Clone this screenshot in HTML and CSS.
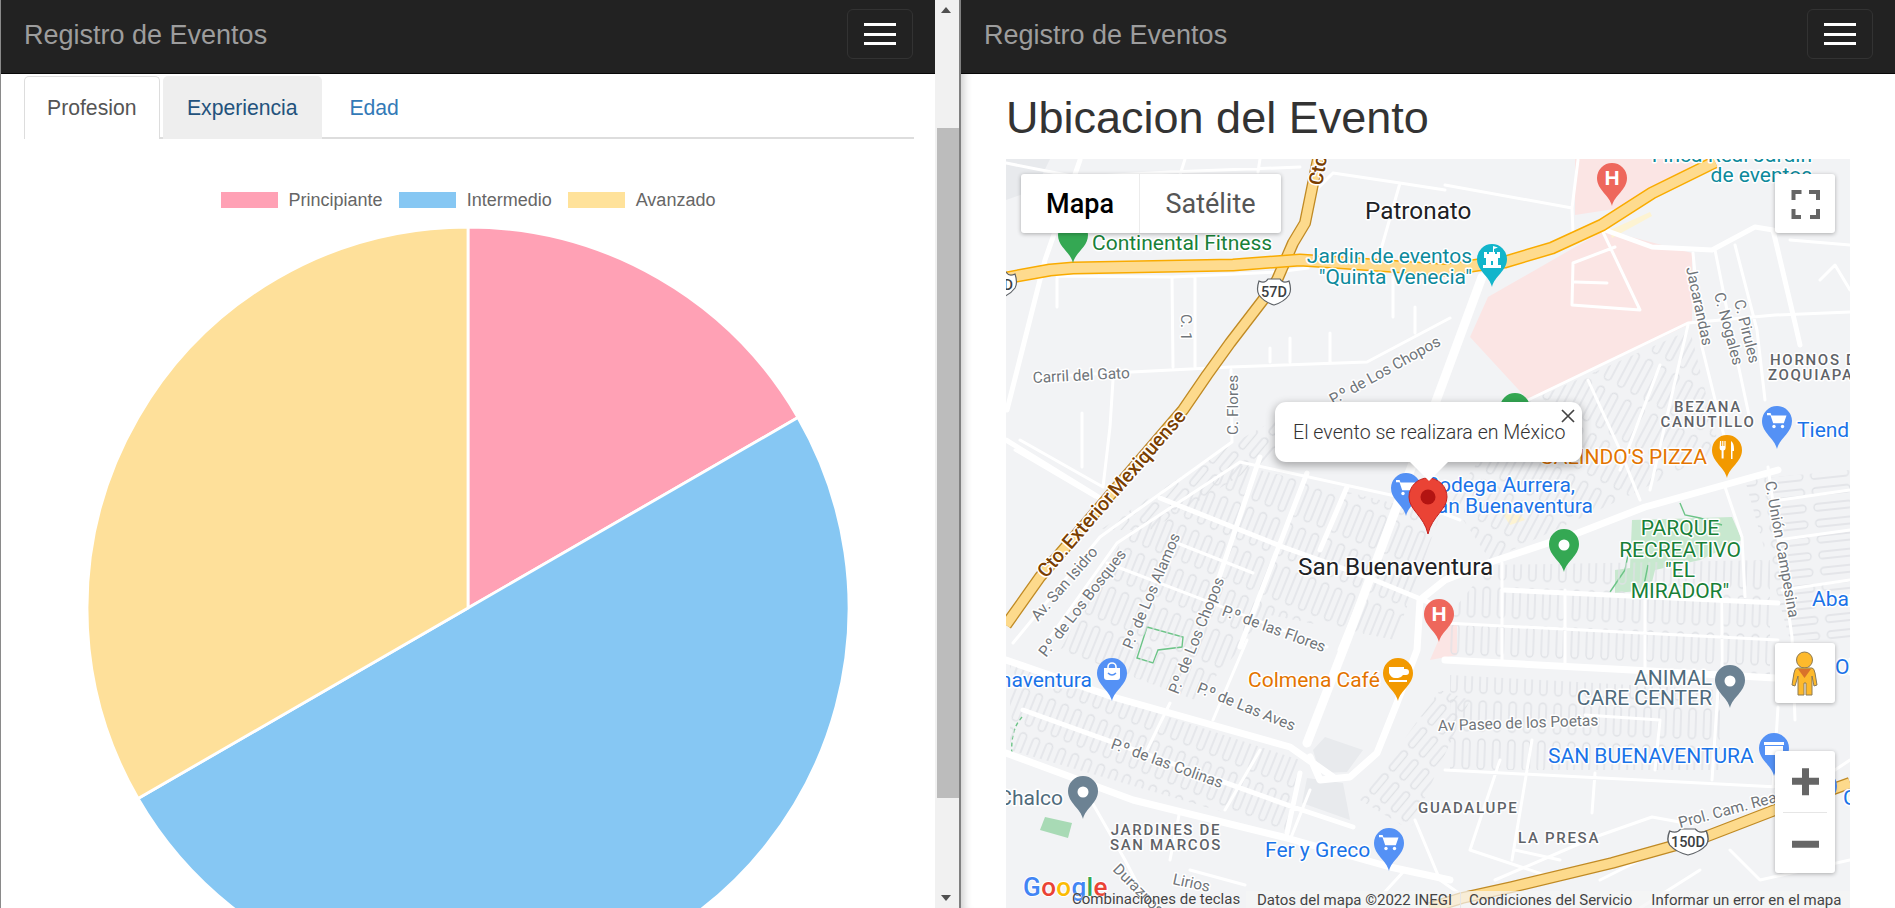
FILE: index.html
```html
<!DOCTYPE html>
<html lang="es">
<head>
<meta charset="utf-8">
<title>Registro de Eventos</title>
<link rel="stylesheet" href="styles.css">
</head>
<body>
<div class="app">
  <section class="pane-left">
    <div class="left-main">
      <nav class="navbar">
        <a class="brand">Registro de Eventos</a>
        <button class="toggler"><span></span><span></span><span></span></button>
      </nav>
      <ul class="tabs">
        <li class="tab active">Profesion</li>
        <li class="tab hover">Experiencia</li>
        <li class="tab">Edad</li>
      </ul>
      <div class="legend">
        <div class="legend-item"><i class="swatch pink"></i>Principiante</div>
        <div class="legend-item"><i class="swatch blue"></i>Intermedio</div>
        <div class="legend-item"><i class="swatch yellow"></i>Avanzado</div>
      </div>
      <svg class="pie" viewBox="-385 -385 770 770" width="770" height="770">
        <path class="slice s-pink" d="M0,0 L0,-381 A381,381 0 0 1 329.96,-190.5 Z"/>
        <path class="slice s-blue" d="M0,0 L329.96,-190.5 A381,381 0 0 1 -329.96,190.5 Z"/>
        <path class="slice s-yellow" d="M0,0 L-329.96,190.5 A381,381 0 0 1 0,-381 Z"/>
      </svg>
    </div>
    <div class="scrollbar">
      <div class="arrow-up"></div>
      <div class="thumb"></div>
      <div class="arrow-down"></div>
    </div>
  </section>

  <section class="pane-right">
    <nav class="navbar">
      <a class="brand">Registro de Eventos</a>
      <button class="toggler"><span></span><span></span><span></span></button>
    </nav>
    <div class="right-body">
      <h2 class="title">Ubicacion del Evento</h2>
      <div class="map">
        <svg class="map-canvas" viewBox="1006 159 844 749" width="844" height="749">
          <defs>
            <path id="pin" d="M0,43 C-2.5,32 -15,27 -15,15 A15,15 0 1 1 15,15 C15,27 2.5,32 0,43Z"/>
            <g id="cart"><path class="ico" d="M-10,7 h3.6 l.9,2.6 h15 l-2.7,7.6 h-10.6 l-2.7,-8 h-3.5z"/><circle class="ico" cx="-3" cy="20.5" r="1.7"/><circle class="ico" cx="5.5" cy="20.5" r="1.7"/></g>
            <path id="shield" d="M-15,-11 Q-9,-8 -6,-13 H6 Q9,-8 15,-11 Q18,-2 15,3 Q10,10 0,13 Q-10,10 -15,3 Q-18,-2 -15,-11Z"/>
            <pattern id="comb22" width="14" height="42" patternUnits="userSpaceOnUse" patternTransform="rotate(22)"><rect class="alley" x="3" y="2" width="7" height="34" rx="3.5"/></pattern>
            <pattern id="comb40" width="14" height="30" patternUnits="userSpaceOnUse" patternTransform="rotate(40)"><rect class="alley" x="3" y="2" width="6.5" height="24" rx="3.2"/></pattern>
            <pattern id="comb28" width="15" height="46" patternUnits="userSpaceOnUse" patternTransform="rotate(28)"><rect class="alley" x="3" y="3" width="7" height="38" rx="3.5"/></pattern>
            <pattern id="comb3" width="15" height="38" patternUnits="userSpaceOnUse" patternTransform="rotate(2)"><rect class="alley" x="3" y="3" width="7" height="30" rx="3.5"/></pattern>
            <pattern id="combh" width="46" height="16" patternUnits="userSpaceOnUse" patternTransform="rotate(-6)"><rect class="alley" x="3" y="3" width="38" height="7" rx="3.5"/></pattern>
          </defs>

          <rect class="land" x="1006" y="159" width="844" height="749"/>

          <path class="pink-area" d="M1575,159 L1700,159 L1640,205 L1575,215Z M1488,297 L1605,230 L1692,253 L1692,323 L1528,400 L1470,337Z M1445,625 L1457,625 L1457,655 L1430,660Z"/>
          <path class="pale-area" d="M1610,230 L1650,212 L1652,216 L1612,238Z M1500,510 L1512,505 L1525,520 L1510,525Z"/>
          <path class="gray-area" d="M1302,803 L1307,778 L1343,783 L1350,820Z M1313,750 L1325,737 L1363,750 L1347,772 L1320,773Z M1002,159 L1050,159 L1035,190 L1006,200Z"/>
          <path class="park-soft" d="M1632,520 L1732,517 L1742,540 L1700,560 L1655,570 L1650,590 L1615,593 L1615,570 L1630,568Z"/>
          <path class="park" d="M1040,830 L1045,817 L1072,823 L1068,838Z"/>
          <path class="park-line" d="M1147,627 L1183,637 L1182,647 L1158,650 L1153,663 L1137,658 Z M1680,503 L1685,515 L1700,518 L1722,525 M1610,592 L1625,570 L1630,545 M1643,590 L1648,565"/>
          <path class="park-line dashed" d="M1022,717 Q1010,730 1012,755"/>

          <path fill="url(#comb22)" d="M1125,535 L1240,465 L1440,515 L1395,640 L1270,615 L1195,700 L1060,650Z"/>
          <path fill="url(#comb40)" d="M1100,530 L1230,445 L1275,420 L1275,455 L1150,530Z"/>
          <path fill="url(#comb28)" d="M1520,405 L1690,330 L1720,450 L1620,500 L1490,560 L1450,500Z"/>
          <path fill="url(#comb3)" d="M1490,565 L1770,560 L1770,680 L1445,660 L1445,620Z"/>
          <path fill="url(#comb22)" d="M1010,665 L1300,760 L1285,830 L1010,750Z"/>
          <path fill="url(#comb3)" d="M1450,675 L1720,690 L1720,770 L1450,770Z"/>
          <path fill="url(#combh)" d="M1745,480 L1850,470 L1850,640 L1790,640Z"/>
          <path fill="url(#comb40)" d="M1360,800 L1440,690 L1470,700 L1410,830Z"/>

          <path class="road r-thin" d="M1006,163 L1077,177 L1170,172 L1300,167 M1185,159 L1180,175 M1260,159 L1258,172 M1057,276 L1173,277 L1277,272 L1308,268 M1033,377 L1230,367 L1367,362 L1450,318 M1172,277 L1173,367 M1195,277 L1195,367 M1057,278 L1057,307 M1333,173 L1400,183 L1445,190 M1333,173 L1318,188 M1400,183 L1380,253 M1393,277 L1393,317 M1415,307 L1415,333 M1330,333 L1330,363 M1290,338 L1290,362 M1270,348 L1270,362 M1113,380 L1110,427 L1103,487 M1082,413 L1082,467 M1020,440 L1103,487 M1015,450 L1095,497 M1231,370 L1232,442 L1100,537 L1013,643 M1240,462 L1117,543 L1043,647 M1240,462 L1400,497 L1460,520 M1107,563 L1327,647 M1177,543 L1253,573 M1445,185 L1572,208 L1573,233 M1578,160 L1572,208 M1615,247 L1573,263 L1572,305 L1640,310 L1602,230 M1575,282 L1607,283 M1528,400 L1688,323 L1775,315 L1850,312 M1693,253 L1702,347 L1725,440 M1715,250 L1735,350 L1750,420 M1735,245 L1757,330 L1765,400 M1790,240 L1850,245 M1820,280 L1835,265 L1850,290 M1588,380 L1620,450 L1640,500 M1660,365 L1620,470 M1688,325 L1650,490 M1725,487 L1742,537 L1745,597 M1768,467 L1792,637 L1795,720 M1778,540 L1850,530 M1782,590 L1850,580 M1780,500 L1850,490 M1502,563 L1502,663 M1565,590 L1565,663 M1645,600 L1645,667 M1722,603 L1722,677 M1445,623 L1778,640 M1445,770 L1778,787 M1532,740 L1512,860 M1595,773 L1592,813 M1652,817 L1595,837 L1495,880 M1652,817 L1685,823 M1718,690 L1712,780 M1778,707 L1773,787 M1585,715 L1660,720 L1655,770 M1170,703 L1147,750 M1247,640 L1213,720 M1260,750 L1225,810 M1310,790 L1290,840 M1085,790 L1125,860 L1150,908 M1180,810 L1170,860 M1190,870 L1245,885 M1405,870 L1370,908 M1415,820 L1440,880 L1480,908 M1470,850 L1560,880 M1560,860 L1515,850 M1500,760 L1470,850 M1600,880 L1660,850 M1700,870 L1640,908 M1850,760 L1790,800 M1730,850 L1760,880 L1850,860"/>
          <path class="road r-mid" d="M1080,160 L1045,260 L1007,410 M1023,710 L1293,807 L1353,827 M1160,498 L1283,547 L1367,577 L1440,607 M1397,510 L1340,650 M1307,473 L1240,647 M1260,457 L1207,613 M1347,487 L1320,550 M1300,773 L1287,833 M1605,230 L1652,247 L1712,250 L1755,227 L1773,230 L1795,323 L1800,345 M1503,590 L1778,603 M1006,440 L1103,500"/>
          <path class="road r-thick" d="M1006,660 L1113,697 L1290,747 L1333,777 M1006,753 L1133,800 L1283,837 L1390,867 L1450,880 M1445,660 L1632,670 L1775,678 M1778,470 L1645,507 L1578,533 L1488,563 L1445,580 L1420,600 L1417,650 L1397,703 L1377,753 L1350,777 L1320,780 L1310,757"/>
          <path class="road r-wide" d="M1482,277 L1445,377 L1347,640 L1307,743"/>

          <path class="hw-edge" d="M1318,159 L1305,223 L1293,243 L1277,280 L1263,300 L1230,343 L1207,375 L1183,410 L1117,487 L1040,577 L1006,625"/>
          <path class="hw-fill" d="M1318,159 L1305,223 L1293,243 L1277,280 L1263,300 L1230,343 L1207,375 L1183,410 L1117,487 L1040,577 L1006,625"/>
          <path class="hw-edge2" d="M1006,278 L1050,270 L1073,268 L1233,265 L1300,260 L1345,263 L1445,270 L1478,265 L1505,262 L1552,248 L1602,225 L1652,193 L1715,162"/>
          <path class="hw-fill2" d="M1006,278 L1050,270 L1073,268 L1233,265 L1300,260 L1345,263 L1445,270 L1478,265 L1505,262 L1552,248 L1602,225 L1652,193 L1715,162"/>
          <path class="hw-edge" d="M1850,783 L1775,810 L1705,837 L1612,863 L1512,887 L1462,898 L1430,908"/>
          <path class="hw-fill" d="M1850,783 L1775,810 L1705,837 L1612,863 L1512,887 L1462,898 L1430,908"/>

          <g transform="translate(1274,292)"><use href="#shield" class="shield"/><text class="shield-text" y="5" text-anchor="middle">57D</text></g>
          <g transform="translate(1688,842) scale(1.22,1)"><use href="#shield" class="shield"/></g>
          <text class="shield-text" x="1688" y="847" text-anchor="middle">150D</text>
          <g transform="translate(1000,285)"><use href="#shield" class="shield"/><text class="shield-text" y="5" text-anchor="middle">57D</text></g>

          <text class="lbl road-name hw" transform="translate(1322,186) rotate(-80)">Cto</text>
          <text class="lbl road-name hw" transform="translate(1046,579) rotate(-49)">Cto. Exterior Mexiquense</text>

          <text class="lbl road-name" transform="translate(1033,383) rotate(-3)">Carril del Gato</text>
          <text class="lbl road-name" transform="translate(1181,314) rotate(90)">C. 1</text>
          <text class="lbl road-name" transform="translate(1238,435) rotate(-90)">C. Flores</text>
          <text class="lbl road-name" transform="translate(1333,405) rotate(-29)">P.º de Los Chopos</text>
          <text class="lbl road-name" transform="translate(1686,268) rotate(78)">Jacarandas</text>
          <text class="lbl road-name" transform="translate(1714,294) rotate(75)">C. Nogales</text>
          <text class="lbl road-name" transform="translate(1734,301) rotate(76)">C. Pirules</text>
          <text class="lbl road-name" transform="translate(1765,482) rotate(80)">C. Unión Campesina</text>
          <text class="lbl road-name" transform="translate(1038,622) rotate(-49)">Av. San Isidro</text>
          <text class="lbl road-name" transform="translate(1046,658) rotate(-52)">P.º de Los Bosques</text>
          <text class="lbl road-name" transform="translate(1132,650) rotate(-67)">P.º de Los Alamos</text>
          <text class="lbl road-name" transform="translate(1178,695) rotate(-68)">P.º de Los Chopos</text>
          <text class="lbl road-name" transform="translate(1221,615) rotate(20)">P.º de las Flores</text>
          <text class="lbl road-name" transform="translate(1196,692) rotate(22)">P.º de Las Aves</text>
          <text class="lbl road-name" transform="translate(1110,748) rotate(20)">P.º de las Colinas</text>
          <text class="lbl road-name" transform="translate(1438,731) rotate(-2)">Av Paseo de los Poetas</text>
          <text class="lbl road-name" transform="translate(1680,828) rotate(-15)">Prol. Cam. Real</text>
          <text class="lbl road-name" transform="translate(1172,884) rotate(12)">Lirios</text>
          <text class="lbl road-name" transform="translate(1112,870) rotate(45)">Duraznos</text>

          <text class="lbl place" x="1365" y="219">Patronato</text>
          <text class="lbl place" x="1298" y="575">San Buenaventura</text>

          <text class="lbl area" x="1708" y="412" text-anchor="middle">BEZANA</text>
          <text class="lbl area" x="1708" y="427" text-anchor="middle">CANUTILLO</text>
          <text class="lbl area" x="1770" y="365">HORNOS DE</text>
          <text class="lbl area" x="1768" y="380">ZOQUIAPAN</text>
          <text class="lbl area" x="1166" y="835" text-anchor="middle">JARDINES DE</text>
          <text class="lbl area" x="1166" y="850" text-anchor="middle">SAN MARCOS</text>
          <text class="lbl area" x="1418" y="813">GUADALUPE</text>
          <text class="lbl area" x="1518" y="843">LA PRESA</text>

          <text class="lbl poi c-green" x="1092" y="250">Continental Fitness</text>
          <text class="lbl poi c-teal" x="1472" y="263" text-anchor="end">Jardin de eventos</text>
          <text class="lbl poi c-teal" x="1472" y="284" text-anchor="end">"Quinta Venecia"</text>
          <text class="lbl poi c-teal" x="1812" y="162" text-anchor="end">Finca Real Jardin</text>
          <text class="lbl poi c-teal" x="1812" y="182" text-anchor="end">de eventos</text>
          <text class="lbl poi c-blue" x="1797" y="437">Tienda</text>
          <text class="lbl poi c-orange" x="1707" y="464" text-anchor="end">GALINDO'S PIZZA</text>
          <text class="lbl poi c-blue" x="1575" y="492" text-anchor="end">Bodega Aurrera,</text>
          <text class="lbl poi c-blue" x="1593" y="513" text-anchor="end">San Buenaventura</text>
          <text class="lbl poi c-green" x="1680" y="535" text-anchor="middle">PARQUE</text>
          <text class="lbl poi c-green" x="1680" y="557" text-anchor="middle">RECREATIVO</text>
          <text class="lbl poi c-green" x="1680" y="577" text-anchor="middle">"EL</text>
          <text class="lbl poi c-green" x="1680" y="598" text-anchor="middle">MIRADOR"</text>
          <text class="lbl poi c-blue" x="1812" y="606">Abarrotes</text>
          <text class="lbl poi c-blue" x="1835" y="674">OXXO</text>
          <text class="lbl poi c-slate" x="1712" y="685" text-anchor="end">ANIMAL</text>
          <text class="lbl poi c-slate" x="1712" y="705" text-anchor="end">CARE CENTER</text>
          <text class="lbl poi c-blue" x="1548" y="763">SAN BUENAVENTURA</text>
          <text class="lbl poi c-blue" x="1265" y="857">Fer y Greco</text>
          <text class="lbl poi c-slate" x="1063" y="805" text-anchor="end">Chalco</text>
          <text class="lbl poi c-blue" x="1092" y="687" text-anchor="end">Buenaventura</text>
          <text class="lbl poi c-orange" x="1248" y="687">Colmena Café</text>
          <text class="lbl poi c-blue" x="1843" y="805">Gas</text>

          <g transform="translate(1073,220)"><use href="#pin" class="p-green"/></g>
          <g transform="translate(1612,163)"><use href="#pin" class="p-red"/><text class="h-mark" y="22" text-anchor="middle">H</text></g>
          <g transform="translate(1492,244)"><use href="#pin" class="p-teal"/><path class="ico" d="M-8,8 h3 v2 h2 v-2 h6 v2 h2 v-2 h3 v6 h-2 v7 h3 v3 h-18 v-3 h3 v-7 h-2z M-1,17 v4 h2 v-4z"/><path class="ico" d="M1,2 l5,1.5 l-4,1.5 v3 h-1z"/></g>
          <g transform="translate(1515,393)"><use href="#pin" class="p-green"/></g>
          <g transform="translate(1777,406)"><use href="#pin" class="p-blue"/><use href="#cart"/></g>
          <g transform="translate(1727,435)"><use href="#pin" class="p-orange"/><path class="ico" d="M-7,6 h1.2 v5 h1 v-5 h1.2 v5 h1 v-5 h1.2 v7 q0,2 -2,2.5 v8 h-2 v-8 q-2,-.5 -2,-2.5z M4,6 q3,2 3,8 v2 h-1.5 v8 h-1.5z"/></g>
          <g transform="translate(1564,529)"><use href="#pin" class="p-green"/><circle class="ico" cy="16" r="5.5"/></g>
          <g transform="translate(1439,599)"><use href="#pin" class="p-red"/><text class="h-mark" y="22" text-anchor="middle">H</text></g>
          <g transform="translate(1730,665)"><use href="#pin" class="p-slate"/><circle class="ico" cy="16" r="5.5"/></g>
          <g transform="translate(1774,733)"><use href="#pin" class="p-blue"/><path class="ico" d="M-10,9 h20 v3 h-20z M-9,13 h18 v9 h-18z"/></g>
          <g transform="translate(1112,658)"><use href="#pin" class="p-blue"/><path class="ico" d="M-8,10 h16 v9 q0,3 -3,3 h-10 q-3,0 -3,-3z"/><path class="ico-line" d="M-4,10 v-1 a4,4 0 0 1 8,0 v1"/><path class="ico-cut" d="M-4,15 q4,4 8,0"/></g>
          <g transform="translate(1398,658)"><use href="#pin" class="p-orange"/><path class="ico" d="M-9,9 h15 v2 h2 q3,0 3,3 t-3,3 h-3 q-2,3 -5,3 h-3 q-4,0 -6,-5z M-9,22 h18 v2 h-18z"/></g>
          <g transform="translate(1083,776)"><use href="#pin" class="p-slate"/><circle class="ico" cy="16" r="5.5"/></g>
          <g transform="translate(1389,828)"><use href="#pin" class="p-blue"/><use href="#cart"/></g>
          <g transform="translate(1406,473)"><use href="#pin" class="p-blue"/><use href="#cart"/></g>
          <g transform="translate(1822,771)"><use href="#pin" class="p-blue"/></g>

          <path class="marker" d="M1428,534 C1424,516 1409,510 1409,497 A19,19 0 1 1 1447,497 C1447,510 1432,516 1428,534Z"/>
          <circle class="marker-dot" cx="1428" cy="497" r="7.5"/>

          <text class="lbl logo" x="1023" y="896"><tspan class="g-b">G</tspan><tspan class="g-r">o</tspan><tspan class="g-y">o</tspan><tspan class="g-b">g</tspan><tspan class="g-g">l</tspan><tspan class="g-r">e</tspan></text>
        </svg>

        <div class="map-type">
          <div class="map-type-btn on">Mapa</div>
          <div class="map-type-btn">Satélite</div>
        </div>
        <button class="ctrl fullscreen">
          <svg viewBox="0 0 60 60" width="60" height="60"><path class="fs-icon" d="M18.5,26 V18 H26.5 M34,18 H43 V26 M43,35 V43 H35 M26,43 H18.5 V35"/></svg>
        </button>
        <button class="ctrl pegman">
          <svg viewBox="0 0 60 60" width="60" height="60">
            <circle class="peg" cx="29.5" cy="17" r="8"/>
            <path class="peg" d="M22,25 H37 Q39,25 40,30 L42,42 L39,43 L37,33 V52 H31 V40 H29 V52 H23 V33 L20,43 L17,42 L19,30 Q20,25 22,25Z"/>
            <path class="peg-v" d="M23,26 H36 L29.5,35Z"/>
          </svg>
        </button>
        <div class="ctrl zoom">
          <svg class="zoom-btn" viewBox="0 0 60 60" width="60" height="60"><path class="zoom-icon" d="M17,30 H44 M30.5,17 V44"/></svg>
          <div class="zoom-sep"></div>
          <svg class="zoom-btn" viewBox="0 0 60 60" width="60" height="60"><path class="zoom-icon" d="M17,31 H44"/></svg>
        </div>

        <div class="info">
          <span class="info-text">El evento se realizara en México</span>
          <svg class="info-close" viewBox="0 0 14 14" width="14" height="14"><path d="M1,1 L13,13 M13,1 L1,13"/></svg>
          <i class="info-tail"></i>
        </div>

        <div class="attrib">
          <span class="a-plain">Combinaciones de teclas</span>
          <div class="a-bar">
            <span>Datos del mapa ©2022 INEGI</span>
            <i class="a-sep"></i>
            <span>Condiciones del Servicio</span>
            <span>Informar un error en el mapa</span>
          </div>
        </div>
      </div>
    </div>
  </section>
</div>
</body>
</html>
```
FILE: styles.css
```css
* { box-sizing: border-box; }
html, body { margin: 0; height: 100%; overflow: hidden; background: #fff; }
body { font-family: "Liberation Sans", Arial, sans-serif; color: #333; }

.app { display: flex; width: 1895px; height: 908px; overflow: hidden; }

/* left pane */
.pane-left { display: flex; width: 961px; height: 908px; border-left: 1px solid #8a8a8a; border-right: 2px solid #808080; flex: none; }
.left-main { width: 934px; flex: none; overflow: hidden; }

.navbar { display: flex; align-items: center; justify-content: space-between; height: 74px; padding: 0 22px 0 23px; background: #222; border-bottom: 1px solid #080808; flex: none; }
.brand { font-size: 27px; color: #9d9d9d; margin-bottom: 3px; }
.toggler { display: flex; flex-direction: column; justify-content: center; gap: 6.5px; width: 66px; height: 50px; padding: 0; margin: 0 0 5px; align-items: center; background: transparent; border: 1px solid #333; border-radius: 6px; }
.toggler span { display: block; width: 32px; height: 3px; background: #fff; }

.tabs { display: flex; list-style: none; margin: 2px 21px 0 23px; padding: 0; height: 63px; border-bottom: 2px solid #ddd; gap: 3px; }
.tab { display: flex; align-items: center; height: 63px; padding: 0 23.4px; font-size: 21.2px; color: #337ab7; border: 1px solid transparent; border-bottom: 0; border-radius: 5px 5px 0 0; }
.tab:first-child { padding: 0 22px; }
.tab.active { color: #555; background: #fff; border-color: #ddd; }
.tab.hover { color: #23527c; background: #eee; }

.legend { display: flex; justify-content: center; gap: 16px; margin-top: 53px; height: 16px; font-size: 18px; color: #666; }
.legend-item { display: flex; align-items: center; gap: 11px; }
.swatch { display: block; width: 57px; height: 16px; }
.swatch.pink { background: #ffa1b5; }
.swatch.blue { background: #86c7f3; }
.swatch.yellow { background: #ffe29a; }

.pie { display: block; margin: 15px auto 0; }
.slice { stroke: #fff; stroke-width: 2.8; }
.s-pink { fill: #ffa1b5; }
.s-blue { fill: #86c7f3; }
.s-yellow { fill: #fee09a; }

.scrollbar { position: relative; width: 24px; flex: none; background: #f1f1f1; }
.thumb { position: absolute; top: 128px; left: 2px; right: 0; height: 670px; background: #bcbcbc; }
.arrow-up, .arrow-down { position: absolute; left: 6px; width: 0; height: 0; border-left: 5.5px solid transparent; border-right: 5.5px solid transparent; }
.arrow-up { top: 7px; border-bottom: 6px solid #505050; }
.arrow-down { bottom: 7px; border-top: 6px solid #505050; }

/* right pane */
.pane-right { display: flex; flex-direction: column; flex: 1; min-width: 0; height: 908px; }
.right-body { flex: 1; padding-left: 45px; box-shadow: inset 10px 0 9px -7px rgba(0, 0, 0, .2); overflow: hidden; }
.title { margin: 0; height: 85px; padding-top: 18px; font-size: 45px; line-height: 52px; font-weight: 400; color: #333; }

/* map */
.map { position: relative; width: 844px; height: 749px; overflow: hidden; background: #f2f3f5; font-family: Roboto, sans-serif; }
.map-canvas { display: block; }
.land { fill: #f2f3f5; }
.pink-area { fill: #fbe5e4; }
.pale-area { fill: #fdf3d2; }
.gray-area { fill: #e8eaed; }
.park-soft { fill: #c8e8cf; }
.park { fill: #a8dab5; }
.park-line { fill: none; stroke: #6cc487; stroke-width: 1.4; }
.park-line.dashed { stroke-dasharray: 4 3; }
.alley { fill: none; stroke: #dfe1e5; stroke-width: 1.3; }
.road { fill: none; stroke: #fff; stroke-linejoin: round; stroke-linecap: round; }
.r-thin { stroke-width: 3; }
.r-mid { stroke-width: 5; }
.r-thick { stroke-width: 7; }
.r-wide { stroke-width: 9; }
.hw-edge { fill: none; stroke: #c08a24; stroke-width: 12; stroke-linejoin: round; }
.hw-fill { fill: none; stroke: #fdda8c; stroke-width: 9.4; stroke-linejoin: round; }
.hw-edge2 { fill: none; stroke: #f9ab00; stroke-width: 13; stroke-linejoin: round; }
.hw-fill2 { fill: none; stroke: #fedb8e; stroke-width: 10; stroke-linejoin: round; }

.shield { fill: #fff; stroke: #5f6368; stroke-width: 1.2; }
.shield-text { font: 500 14.5px Roboto, sans-serif; fill: #3c4043; }

.lbl { paint-order: stroke; stroke: #fff; stroke-width: 3px; stroke-linejoin: round; font-family: Roboto, sans-serif; }
.road-name { font-size: 15.4px; fill: #70757a; }
.road-name.hw { font-size: 19.6px; font-weight: 500; word-spacing: -2.5px; fill: #7a3e00; }
.place { font-size: 24.3px; fill: #202124; }
.area { font-size: 15px; font-weight: 500; letter-spacing: 1.7px; fill: #5f6368; }
.poi { font-size: 21px; }
.c-green { fill: #188038; }
.c-teal { fill: #0d8a9c; }
.c-blue { fill: #1a73e8; }
.c-orange { fill: #e37400; }
.c-slate { fill: #4f6b7c; }

.p-green { fill: #34a853; }
.p-red { fill: #ee675c; }
.p-teal { fill: #12b5cb; }
.p-blue { fill: #5491f5; }
.p-orange { fill: #f29900; }
.p-slate { fill: #6c8293; }
.ico { fill: #fff; }
.ico-line { fill: none; stroke: #fff; stroke-width: 1.6; }
.ico-cut { fill: none; stroke: #5491f5; stroke-width: 1.5; }
.h-mark { font: 700 21px "Liberation Sans", sans-serif; fill: #fff; }
.marker { fill: #ea4335; stroke: #c5221f; stroke-width: 1; }
.marker-dot { fill: #b31412; }

.logo { font-family: Roboto, sans-serif; font-size: 26px; font-weight: 500; letter-spacing: .4px; stroke-width: 2px; }
.g-b { fill: #4285f4; }
.g-r { fill: #ea4335; }
.g-y { fill: #fbbc04; }
.g-g { fill: #34a853; }

.map-type { position: absolute; left: 15px; top: 15px; display: flex; height: 59px; background: #fff; border-radius: 3px; box-shadow: 0 1px 4px rgba(0, 0, 0, .3); font-size: 27px; }
.map-type-btn { display: flex; align-items: center; justify-content: center; width: 141px; color: #565656; }
.map-type-btn.on { width: 119px; color: #000; font-weight: 500; border-right: 1px solid #ececec; }

.ctrl { position: absolute; left: 769px; width: 60px; padding: 0; margin: 0; border: 0; background: #fff; border-radius: 3px; box-shadow: 0 1px 4px rgba(0, 0, 0, .3); }
.ctrl svg { display: block; }
.fullscreen { top: 15px; height: 59px; }
.pegman { top: 484px; height: 60px; }
.zoom { top: 592px; height: 122px; }
.fs-icon { fill: none; stroke: #666; stroke-width: 4; }
.zoom-icon { fill: none; stroke: #666; stroke-width: 7; }
.zoom-btn { height: 60.5px; }
.zoom-sep { height: 1px; margin: 0 8px; background: #e6e6e6; }
.peg { fill: #fdb92c; stroke: #8c7a55; stroke-width: 1; }
.peg-v { fill: #d9722a; }

.info { position: absolute; left: 269px; top: 243px; width: 307px; height: 60px; padding: 0 18px; display: flex; align-items: center; background: #fff; border-radius: 11px; box-shadow: 0 3px 9px 1px rgba(0, 0, 0, .3); font-size: 19.6px; font-weight: 300; color: #333; white-space: nowrap; }
.info-close { position: absolute; right: 7px; top: 7px; fill: none; stroke: #444; stroke-width: 1.7; }
.info-tail { position: absolute; left: 135px; top: 60px; width: 0; height: 0; border-left: 19px solid transparent; border-right: 19px solid transparent; border-top: 19px solid #fff; }

.attrib { position: absolute; left: 0; right: 0; bottom: 0; height: 17px; display: flex; font-size: 15px; line-height: 16px; color: #444; white-space: nowrap; }
.a-plain { margin-left: 66px; width: 174px; flex: none; text-shadow: 0 0 2px #fff; }
.a-bar { display: flex; flex: 1; align-items: center; gap: 8px; padding-left: 11px; background: rgba(245, 245, 245, .7); }
.a-sep { display: block; width: 1px; height: 16px; margin: 0; background: #e6e6e6; }
.a-bar span:last-child { margin-left: 11px; }
```
